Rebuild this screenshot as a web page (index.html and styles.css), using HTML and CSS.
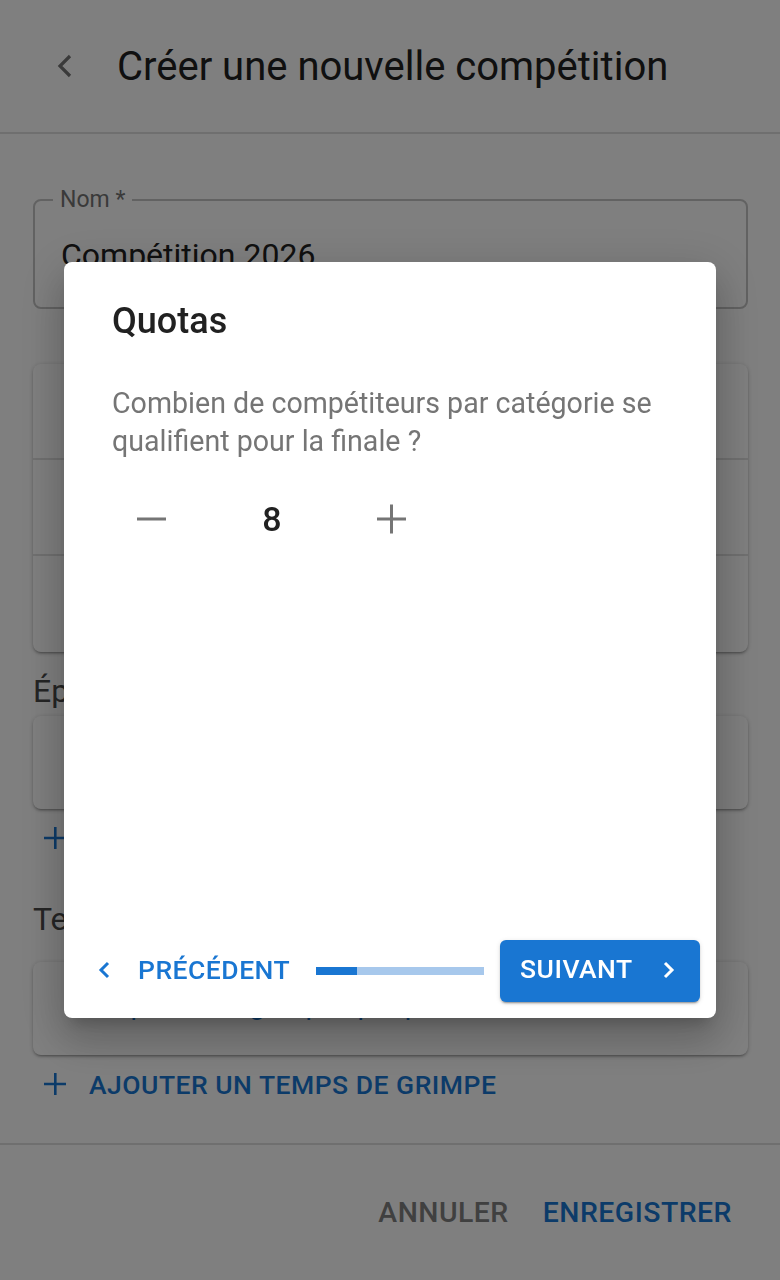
FILE: index.html
```html
<!DOCTYPE html>
<html lang="fr">

<head>
    <meta charset="UTF-8">
    <meta name="viewport" content="width=device-width, initial-scale=1.0">
    <title>Créer une nouvelle compétition</title>
    <link rel="stylesheet" href="styles.css">
</head>

<body>
    <div class="page">
        <header class="app-bar">
            <button class="back-btn" aria-label="Retour">
                <svg width="20" height="26" viewBox="0 0 20 26"><polyline points="15,3 5,13 15,23" fill="none" stroke="currentColor" stroke-width="3.2"/></svg>
            </button>
            <h1>Créer une nouvelle compétition</h1>
        </header>

        <main class="content">
            <div class="field">
                <span class="field-label">Nom *</span>
                <span class="field-value">Compétition 2026</span>
            </div>

            <!-- rows are hidden behind the dialog -->
            <div class="card list">
                <div class="row"></div>
                <div class="row"></div>
                <div class="row"></div>
            </div>

            <h2 class="section-title">Épreuves</h2>
            <div class="card single">
                <div class="row"></div>
            </div>
            <button class="add-btn">
                <svg width="24" height="24" viewBox="0 0 24 24"><path d="M11 1h2.6v22H11zM1 10.7h22v2.6H1z" fill="currentColor"/></svg>
                Ajouter une épreuve
            </button>

            <h2 class="section-title second">Temps de grimpe</h2>
            <div class="card single">
                <div class="row link">1 épreuve, 2 groupes par poule</div>
            </div>
            <button class="add-btn">
                <svg width="24" height="24" viewBox="0 0 24 24"><path d="M11 1h2.6v22H11zM1 10.7h22v2.6H1z" fill="currentColor"/></svg>
                Ajouter un temps de grimpe
            </button>
        </main>

        <footer class="actions">
            <button class="text-btn muted">Annuler</button>
            <button class="text-btn primary">Enregistrer</button>
        </footer>
    </div>

    <div class="backdrop">
        <div class="dialog" role="dialog">
            <h2 class="dialog-title">Quotas</h2>
            <p class="dialog-text">Combien de compétiteurs par catégorie se qualifient pour la finale ?</p>

            <div class="stepper">
                <button class="step-btn" aria-label="Moins">
                    <svg width="48" height="48" viewBox="0 0 48 48"><rect x="9" y="22.5" width="29" height="3" fill="currentColor"/></svg>
                </button>
                <span class="step-value">8</span>
                <button class="step-btn" aria-label="Plus">
                    <svg width="48" height="48" viewBox="0 0 48 48"><rect x="9" y="22.5" width="29" height="3" fill="currentColor"/><rect x="22" y="9.5" width="3" height="29" fill="currentColor"/></svg>
                </button>
            </div>

            <div class="dialog-footer">
                <button class="nav-btn prev">
                    <svg width="14" height="20" viewBox="0 0 14 20"><polyline points="11,3 4,10 11,17" fill="none" stroke="currentColor" stroke-width="3"/></svg>
                    Précédent
                </button>
                <div class="progress"><div class="progress-fill" style="width: 24%"></div></div>
                <button class="nav-btn next">
                    Suivant
                    <svg width="14" height="20" viewBox="0 0 14 20"><polyline points="3,3 10,10 3,17" fill="none" stroke="currentColor" stroke-width="3"/></svg>
                </button>
            </div>
        </div>
    </div>
</body>

</html>
```

FILE: styles.css
```css
* {
    box-sizing: border-box;
}

body {
    margin: 0;
    font-family: Roboto, "Liberation Sans", sans-serif;
    background-color: #ffffff;
    color: #212121;
}

button {
    font-family: inherit;
    background: none;
    border: none;
    padding: 0;
    cursor: pointer;
}

.page {
    height: 100vh;
    display: flex;
    flex-direction: column;
    overflow: hidden;
}

/* app bar */
.app-bar {
    height: 134px;
    flex-shrink: 0;
    display: flex;
    align-items: center;
    padding: 0 0 0 55px;
    border-bottom: 2px solid #dedede;
}

.back-btn {
    color: #757575;
    display: flex;
    margin-right: 42px;
}

.app-bar h1 {
    margin: 0;
    font-size: 40px;
    font-weight: 400;
    color: #212121;
}

/* content */
.content {
    flex: 1;
    padding: 65px 32px 0 33px;
    overflow: hidden;
}

.field {
    position: relative;
    height: 110px;
    border: 2px solid #c4c4c4;
    border-radius: 8px;
    padding: 0 26px;
    display: flex;
    align-items: center;
}

.field-label {
    position: absolute;
    top: -15px;
    left: 18px;
    background: #ffffff;
    padding: 0 7px;
    font-size: 23px;
    color: #757575;
}

.field-value {
    font-size: 32px;
    color: #212121;
    margin-top: 2px;
}

.card {
    border-radius: 8px;
    box-shadow: 0 2px 2px rgba(0, 0, 0, 0.14), 0 3px 1px -2px rgba(0, 0, 0, 0.12), 0 1px 5px rgba(0, 0, 0, 0.2);
    background: #ffffff;
}

.list {
    margin-top: 55px;
}

.row {
    height: 96px;
    display: flex;
    align-items: center;
    padding: 0 32px;
    font-size: 28px;
    border-bottom: 2px solid #e0e0e0;
}

.row:last-child {
    border-bottom: none;
}

.single .row {
    height: 93px;
}

.row.link {
    color: #1976d2;
    padding-left: 60px;
    padding-bottom: 8px;
}

.section-title {
    margin: 18px 0 4px;
    font-size: 32px;
    font-weight: 400;
    color: #4a4a4a;
    line-height: 42px;
}

.section-title.second {
    margin: 44px 0 22px;
}

.add-btn {
    display: flex;
    align-items: center;
    gap: 22px;
    margin: 13px 0 0 10px;
    height: 32px;
    color: #1976d2;
    font-size: 26.5px;
    font-weight: 500;
    text-transform: uppercase;
    letter-spacing: 0.5px;
}

.actions {
    height: 137px;
    flex-shrink: 0;
    border-top: 2px solid #dedede;
    display: flex;
    justify-content: flex-end;
    align-items: center;
    gap: 34px;
    padding: 0 48px 0 0;
}

.text-btn {
    font-size: 28.4px;
    font-weight: 500;
    text-transform: uppercase;
    letter-spacing: 0.5px;
}

.text-btn.muted {
    color: #808080;
}

.text-btn.primary {
    color: #1976d2;
}

/* dialog */
.backdrop {
    position: fixed;
    inset: 0;
    background-color: rgba(0, 0, 0, 0.5);
    display: flex;
    align-items: center;
    justify-content: center;
}

.dialog {
    width: 652px;
    height: 756px;
    background: #ffffff;
    border-radius: 8px;
    box-shadow: 0 11px 15px -7px rgba(0, 0, 0, 0.2), 0 24px 38px 3px rgba(0, 0, 0, 0.14), 0 9px 46px 8px rgba(0, 0, 0, 0.12);
    display: flex;
    flex-direction: column;
    padding: 38px 16px 16px 48px;
}

.dialog-title {
    margin: 0;
    font-size: 36px;
    font-weight: 500;
    line-height: 42px;
    color: #212121;
}

.dialog-text {
    margin: 42px 0 0;
    font-size: 28.6px;
    line-height: 38px;
    color: #757575;
    padding-right: 16px;
}

.stepper {
    display: flex;
    align-items: center;
    margin: 29px 0 0 -20px;
}

.step-btn {
    width: 120px;
    height: 60px;
    display: flex;
    align-items: center;
    justify-content: center;
    color: #757575;
}

.step-value {
    width: 120px;
    text-align: center;
    font-size: 34px;
    font-weight: 500;
    color: #212121;
}

.dialog-footer {
    margin-top: auto;
    margin-left: -16px;
    display: flex;
    align-items: center;
    height: 62px;
}

.nav-btn {
    display: flex;
    align-items: center;
    font-size: 26.5px;
    font-weight: 500;
    text-transform: uppercase;
    letter-spacing: 0.5px;
}

.nav-btn.prev {
    color: #1976d2;
    gap: 27px;
    padding-left: 1px;
    padding-bottom: 3px;
}

.nav-btn.next {
    height: 62px;
    width: 200px;
    padding: 0 24px 6px 20px;
    margin-left: auto;
    justify-content: space-between;
    background-color: #1976d2;
    color: #ffffff;
    border-radius: 6px;
    box-shadow: 0 3px 1px -2px rgba(0, 0, 0, 0.2), 0 2px 2px rgba(0, 0, 0, 0.14), 0 1px 5px rgba(0, 0, 0, 0.12);
}

.nav-btn.next svg {
    margin-top: 3px;
}

.progress {
    width: 168px;
    height: 8px;
    margin: 0 0 0 26px;
    background-color: #a7c8ec;
}

.progress-fill {
    height: 100%;
    background-color: #1976d2;
}
```
